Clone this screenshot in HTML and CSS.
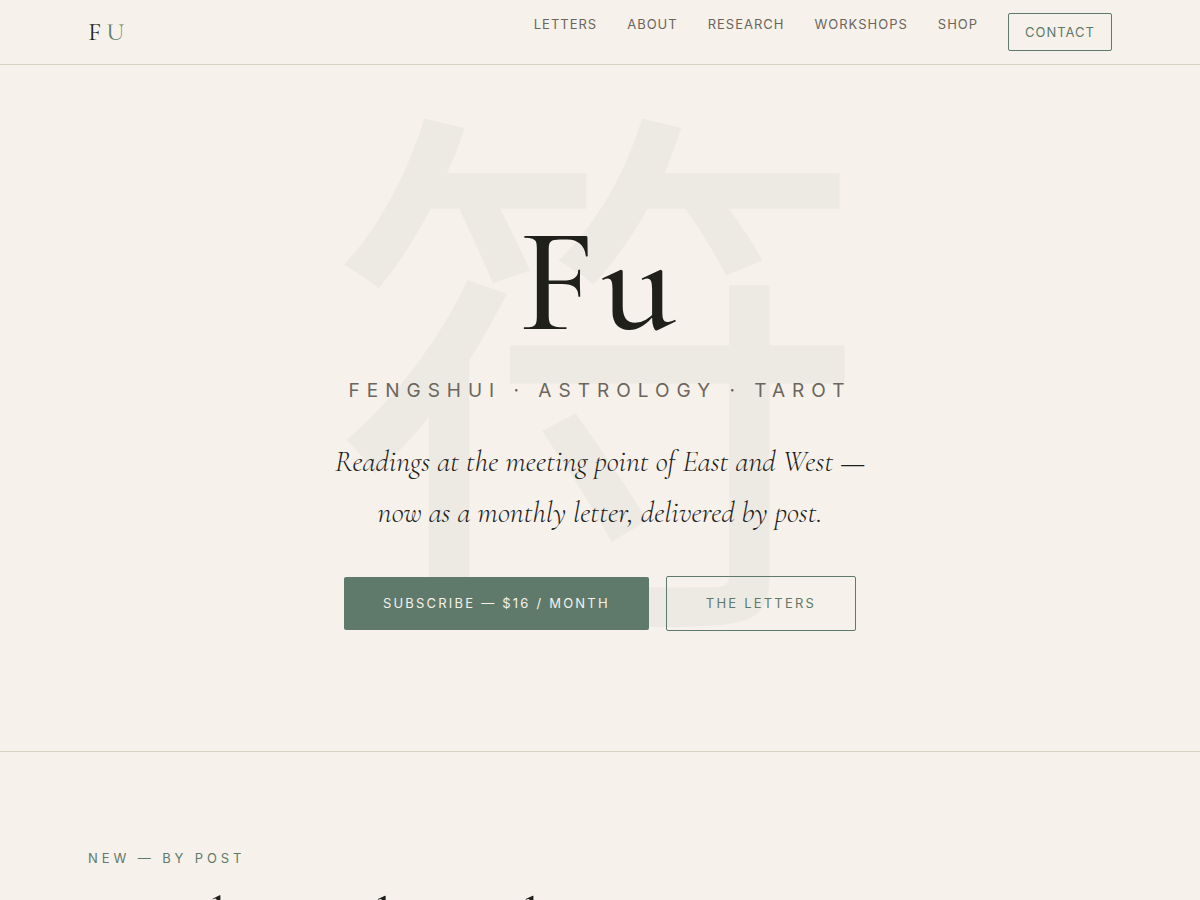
FILE: index.html
```html
<!DOCTYPE html>
<html lang="en">
  <head>
    <meta charset="UTF-8" />
    <meta name="viewport" content="width=device-width, initial-scale=1" />
    <title>Fu</title>
    <link rel="stylesheet" href="styles.css" />
  </head>
  <body>
    <header class="site-header">
      <nav class="container nav">
        <a href="#" class="logo">F<span>U</span></a>
        <ul class="nav-links">
          <li><a href="#letters">Letters</a></li>
          <li><a href="#about">About</a></li>
          <li><a href="#research">Research</a></li>
          <li><a href="#workshops">Workshops</a></li>
          <li><a href="#shop">Shop</a></li>
          <li><a href="#contact" class="nav-contact">Contact</a></li>
        </ul>
      </nav>
    </header>

    <section class="hero">
      <div class="hero-glyph" lang="ja" aria-hidden="true">符</div>
      <div class="hero-content">
        <h1>Fu</h1>
        <p class="hero-sub">Fengshui · Astrology · Tarot</p>
        <p class="hero-tagline">
          Readings at the meeting point of East and West —<br />
          now as a monthly letter, delivered by post.
        </p>
        <div class="hero-actions">
          <a href="#subscribe" class="btn btn-primary">Subscribe — $16 / month</a>
          <a href="#letters" class="btn btn-outline">The Letters</a>
        </div>
      </div>
    </section>

    <section class="letters" id="letters">
      <div class="container">
        <p class="eyebrow">New — by post</p>
        <h2>A reading, each month</h2>
      </div>
    </section>
  </body>
</html>
```
FILE: styles.css
```css
:root {
  --paper: #f6f1ea;
  --ink: #20201b;
  --muted: #6b665d;
  --jade: #5f7a6a;
  --line: #d6d2c4;
  --serif: "Cormorant Garamond", "Liberation Serif", serif;
  --sans: Inter, "Liberation Sans", sans-serif;
}

* {
  box-sizing: border-box;
  margin: 0;
  padding: 0;
}

body {
  background: var(--paper);
  color: var(--ink);
  font-family: var(--sans);
  line-height: 1.7;
  overflow-x: hidden;
}

a {
  text-decoration: none;
}

.container {
  max-width: 1120px;
  margin: 0 auto;
  padding: 0 48px;
}

/* Header */
.site-header {
  border-bottom: 1px solid var(--line);
}

.nav {
  display: flex;
  justify-content: space-between;
  align-items: center;
  padding-top: 13px;
  padding-bottom: 13px;
}

.logo {
  font-family: var(--serif);
  font-size: 26px;
  line-height: 38px;
  letter-spacing: 5px;
  color: var(--ink);
}

.logo span {
  color: var(--jade);
}

.nav-links {
  display: flex;
  gap: 30px;
  list-style: none;
}

.nav-links a {
  display: block;
  font-size: 13px;
  line-height: 22px;
  letter-spacing: 1px;
  text-transform: uppercase;
  color: var(--muted);
}

.nav-links .nav-contact {
  padding: 7px 16px;
  border: 1px solid var(--jade);
  border-radius: 2px;
  color: var(--jade);
}

/* Hero */
.hero {
  position: relative;
  padding: 136px 48px 120px;
  text-align: center;
  border-bottom: 1px solid var(--line);
  overflow: hidden;
}

.hero-glyph {
  position: absolute;
  inset: 0;
  display: flex;
  justify-content: center;
  padding-top: 3px;
  font-family: "Noto Sans CJK JP", sans-serif;
  font-size: 552px;
  font-weight: 400;
  line-height: 1;
  color: var(--jade);
  opacity: 0.05;
  user-select: none;
}

.hero-content {
  position: relative;
}

.hero h1 {
  font-family: var(--serif);
  font-size: 150px;
  font-weight: 500;
  line-height: 160px;
  letter-spacing: 6px;
}

.hero-sub {
  margin-top: 14px;
  font-size: 19px;
  line-height: 32px;
  letter-spacing: 7px;
  text-transform: uppercase;
  color: var(--muted);
}

.hero-tagline {
  margin-top: 29px;
  font-family: var(--serif);
  font-size: 30px;
  font-weight: 300;
  font-style: italic;
  line-height: 51px;
}

.hero-actions {
  display: flex;
  flex-wrap: wrap;
  justify-content: center;
  align-items: center;
  gap: 17px;
  margin-top: 38px;
}

.btn {
  padding: 15px 39px;
  border-radius: 2px;
  font-size: 13px;
  line-height: 23px;
  letter-spacing: 0.17em;
  text-transform: uppercase;
}

.btn-primary {
  background: var(--jade);
  color: var(--paper);
}

.btn-outline {
  border: 1px solid var(--jade);
  color: var(--jade);
}

/* Letters */
.letters {
  padding: 96px 0;
}

.eyebrow {
  font-size: 13px;
  line-height: 20px;
  letter-spacing: 0.3em;
  text-transform: uppercase;
  color: var(--jade);
}

.letters h2 {
  margin-top: 18px;
  font-family: var(--serif);
  font-size: 52px;
  font-weight: 500;
  line-height: 64px;
}
```
